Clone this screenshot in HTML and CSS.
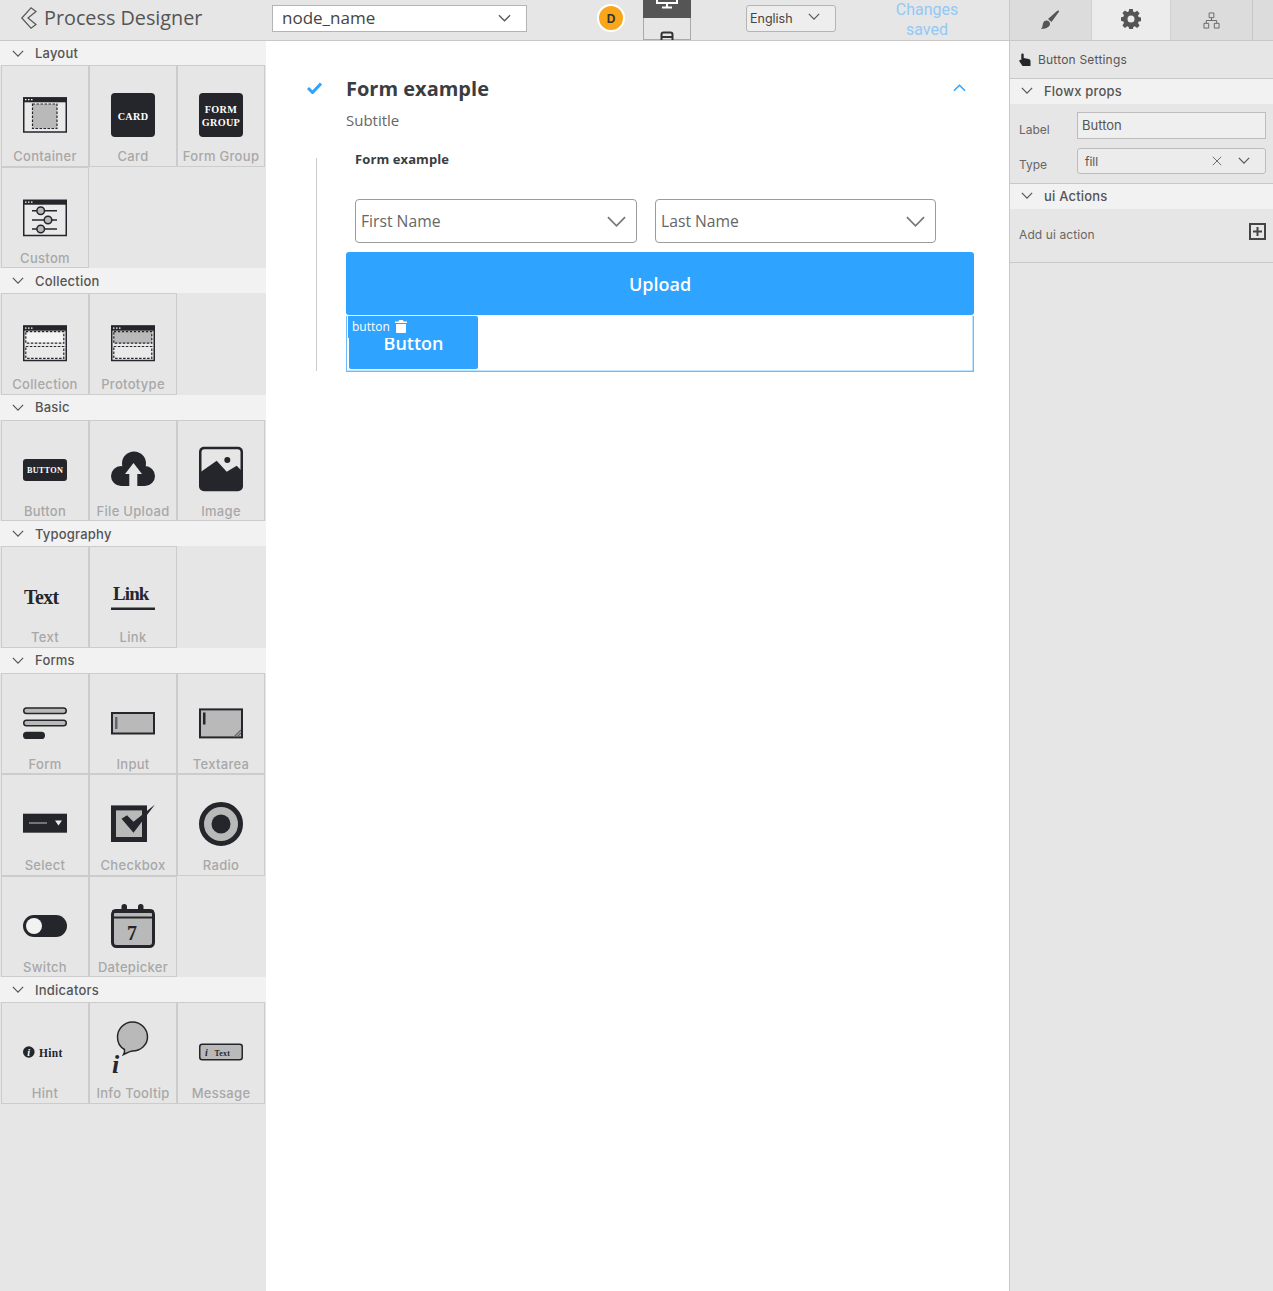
FILE: index.html

```html
<!DOCTYPE html>
<html>
<head>
  <meta charset="UTF-8">
  <title>Process Designer</title>
  <link rel="stylesheet" href="styles.css">
</head>
<body>
  <header class="topbar">
    <div class="brand">
      <svg class="back" viewBox="0 0 16 22"><path d="M10 .8L.8 11 10 21.200l5-3.700L7 11l8-6.500z"/></svg>
      <span>Process Designer</span>
    </div>
    <div class="node-select">
      <span>node_name</span>
      <svg class="chev" viewBox="0 0 14 8"><path d="M1 1l6 6 6-6"/></svg>
    </div>
    <div class="avatar">D</div>
    <div class="devices">
      <div class="device device-on">
        <svg viewBox="0 0 22 16"><path d="M1 -4h20v13H1zM11 9v4M6 13.500h10"/></svg>
      </div>
      <div class="device">
        <svg viewBox="0 0 14 22"><rect x="1.500" y="1.500" width="11" height="19" rx="2"/><path d="M1.500 6h11"/></svg>
      </div>
    </div>
    <div class="lang-select">
      <span>English</span>
      <svg class="chev" viewBox="0 0 14 8"><path d="M1 1l6 6 6-6"/></svg>
    </div>
    <div class="save-state">
      <span>Changes</span>
      <span>saved</span>
    </div>
    <nav class="tabs">
      <div class="tab">
        <svg class="ico-brush" viewBox="0 0 20 20"><path d="M18.500 0.500c.6.400.7 1 .3 1.600L11.500 12 8 9l9-8c.5-.5 1-.8 1.500-.5zM6.500 10.500c2 0 3.800 1.700 3.500 3.800-.4 3-4.500 4.700-9 4.700 1.500-1.500 1.300-3 2-5.500.5-1.800 1.800-3 3.500-3z"/></svg>
      </div>
      <div class="tab tab-active">
        <svg class="ico-gear" viewBox="0 0 20 20"><path fill-rule="evenodd" d="M8.200 0h3.600l.5 2.700 1.500.6 2.300-1.600 2.500 2.500-1.600 2.300.6 1.500 2.700.5v3.600l-2.700.5-.6 1.500 1.600 2.300-2.500 2.500-2.300-1.600-1.500.6-.5 2.700H8.200l-.5-2.700-1.500-.6-2.300 1.600-2.500-2.500 1.600-2.300-.6-1.500L0 11.800V8.200l2.400-.5.6-1.500-1.600-2.300 2.500-2.500 2.300 1.600 1.500-.6zM10 6.500a3.500 3.500 0 100 7 3.500 3.500 0 000-7z"/></svg>
      </div>
      <div class="tab">
        <svg class="ico-tree" viewBox="0 0 18 18"><path d="M6.500 1h5v5h-5zM1 12h5v5H1zM12 12h5v5h-5zM9 6v3M3.500 12V9h11v3"/></svg>
      </div>
      <div class="tab tab-rest"></div>
    </nav>
  </header>

  <div class="workspace">
    <aside class="palette">
      <div class="group-head"><svg class="chev" viewBox="0 0 14 8"><path d="M1 1l6 6 6-6"/></svg>Layout</div>
      <div class="group">
        <div class="cell">
          <svg class="icon" viewBox="0 0 44 44"><rect x="0.750" y="5" width="42.500" height="34" fill="#eaeaea" class="ln"/><rect y="4.300" width="44" height="5" class="dk"/><path d="M2 6.700h1.500M5 6.700h1.500M8 6.700h1.500" class="dots"/><rect x="9.500" y="11" width="24.500" height="24.500" fill="#b9b9b9" class="dash"/></svg>
          <span>Container</span>
        </div>
        <div class="cell">
          <svg class="icon" viewBox="0 0 44 44"><rect width="44" height="44" rx="4" class="dk"/><text x="22" y="27" class="ico-text t10">CARD</text></svg>
          <span>Card</span>
        </div>
        <div class="cell">
          <svg class="icon" viewBox="0 0 44 44"><rect width="44" height="44" rx="4" class="dk"/><text x="22" y="20" class="ico-text t10">FORM</text><text x="22" y="33" class="ico-text t10">GROUP</text></svg>
          <span>Form Group</span>
        </div>
        <div class="cell">
          <svg class="icon" viewBox="0 0 44 44"><rect x="0.750" y="5.500" width="42.500" height="35" fill="#eaeaea" class="ln"/><rect y="4.700" width="44" height="5" class="dk"/><path d="M2 7.100h1.500M5 7.100h1.500M8 7.100h1.500" class="dots"/><path d="M9 15.700h25M9 25h25M9 34h25" class="ln"/><circle cx="17.700" cy="15.700" r="3.800" fill="#b9b9b9" class="ln"/><circle cx="25" cy="25" r="3.800" fill="#b9b9b9" class="ln"/><circle cx="17.700" cy="34" r="3.800" fill="#b9b9b9" class="ln"/></svg>
          <span>Custom</span>
        </div>
      </div>

      <div class="group-head"><svg class="chev" viewBox="0 0 14 8"><path d="M1 1l6 6 6-6"/></svg>Collection</div>
      <div class="group">
        <div class="cell">
          <svg class="icon" viewBox="0 0 44 44"><rect x="0.750" y="5" width="42.500" height="34.500" fill="#eaeaea" class="ln"/><rect y="4.700" width="44" height="5" class="dk"/><path d="M2 7.100h1.500M5 7.100h1.500M8 7.100h1.500" class="dots"/><rect x="2.800" y="10.700" width="38" height="11.500" fill="#f4f4f4" class="dash"/><rect x="2.800" y="25.500" width="38" height="11.800" fill="#eaeaea" class="dash"/></svg>
          <span>Collection</span>
        </div>
        <div class="cell">
          <svg class="icon" viewBox="0 0 44 44"><rect x="0.750" y="5" width="42.500" height="34.500" fill="#eaeaea" class="ln"/><rect y="4.700" width="44" height="5" class="dk"/><path d="M2 7.100h1.500M5 7.100h1.500M8 7.100h1.500" class="dots"/><rect x="2.800" y="10.700" width="38" height="11.500" fill="#b9b9b9" class="dash"/><rect x="2.800" y="25.500" width="38" height="11.800" fill="#eaeaea" class="dash"/></svg>
          <span>Prototype</span>
        </div>
      </div>

      <div class="group-head"><svg class="chev" viewBox="0 0 14 8"><path d="M1 1l6 6 6-6"/></svg>Basic</div>
      <div class="group">
        <div class="cell">
          <svg class="icon" viewBox="0 0 44 44"><rect y="11" width="44" height="22" rx="3" class="dk"/><text x="22" y="25" class="ico-text t8">BUTTON</text></svg>
          <span>Button</span>
        </div>
        <div class="cell">
          <svg class="icon" viewBox="0 0 44 44"><circle cx="23" cy="15.500" r="12" class="dk"/><circle cx="10" cy="28" r="10" class="dk"/><circle cx="34" cy="28" r="10" class="dk"/><rect x="10" y="20" width="24" height="18" class="dk"/><path d="M22.500 15L31 26h-4.700v12h-8V26H14z" fill="#e6e6e6"/></svg>
          <span>File Upload</span>
        </div>
        <div class="cell">
          <svg class="icon" viewBox="0 0 44 44"><rect x="0" y="-1.300" width="44" height="44.600" rx="5" class="dk"/><rect x="2.500" y="1.200" width="39" height="26" rx="3" fill="#e6e6e6"/><path class="dk" d="M2 23.700l15.700-11 10 11 10-6 5 5V32H2z"/><circle cx="28.300" cy="12" r="3" class="dk"/></svg>
          <span>Image</span>
        </div>
      </div>

      <div class="group-head"><svg class="chev" viewBox="0 0 14 8"><path d="M1 1l6 6 6-6"/></svg>Typography</div>
      <div class="group">
        <div class="cell">
          <svg class="icon" viewBox="0 0 44 44"><text x="1" y="29.500" class="ico-word t20">Text</text></svg>
          <span>Text</span>
        </div>
        <div class="cell">
          <svg class="icon" viewBox="0 0 44 44"><text x="2" y="26" class="ico-word t19">Link</text><rect y="33.500" width="44" height="2.500" class="dk"/></svg>
          <span>Link</span>
        </div>
      </div>

      <div class="group-head"><svg class="chev" viewBox="0 0 14 8"><path d="M1 1l6 6 6-6"/></svg>Forms</div>
      <div class="group">
        <div class="cell">
          <svg class="icon" viewBox="0 0 44 44"><rect x="0.750" y="7" width="42.500" height="5.500" rx="2.750" fill="#b9b9b9" class="ln"/><rect x="0.750" y="19.250" width="42.500" height="5.500" rx="2.750" fill="#b9b9b9" class="ln"/><rect y="30.700" width="22" height="7.300" rx="3.600" class="dk"/></svg>
          <span>Form</span>
        </div>
        <div class="cell">
          <svg class="icon" viewBox="0 0 44 44"><rect x="1" y="12" width="42" height="20.500" fill="#b9b9b9" class="ln2"/><rect x="4" y="16" width="2.500" height="12" fill="#666"/></svg>
          <span>Input</span>
        </div>
        <div class="cell">
          <svg class="icon" viewBox="0 0 44 44"><rect x="1" y="8.400" width="42" height="28" fill="#b9b9b9" class="ln2"/><rect x="4" y="11.500" width="2.500" height="12" class="dk"/><path d="M35 36l7-7M38 36l4-4" stroke="#666" stroke-width="1.300"/></svg>
          <span>Textarea</span>
        </div>
        <div class="cell">
          <svg class="icon" viewBox="0 0 44 44"><rect y="11.700" width="44" height="19" class="dk"/><path d="M6 21h18" stroke="#aaa" stroke-width="1.200"/><path d="M32 18.500h7l-3.500 5z" fill="#eee"/></svg>
          <span>Select</span>
        </div>
        <div class="cell">
          <svg class="icon" viewBox="0 0 44 44"><rect x="2.500" y="5.900" width="31" height="31.600" fill="#b9b9b9" class="ln5"/><path class="dk" d="M10.500 16.700l5.500-3.500 6.500 6.500L44 2.400 22.500 30.700z"/></svg>
          <span>Checkbox</span>
        </div>
        <div class="cell">
          <svg class="icon" viewBox="0 0 44 44"><circle cx="22" cy="22" r="19.500" fill="#b9b9b9" stroke="#25262b" stroke-width="5"/><circle cx="22" cy="22" r="9.500" class="dk"/></svg>
          <span>Radio</span>
        </div>
        <div class="cell">
          <svg class="icon" viewBox="0 0 44 44"><rect y="11" width="44" height="22" rx="11" class="dk"/><circle cx="11" cy="22" r="8" fill="#f2f2f2"/></svg>
          <span>Switch</span>
        </div>
        <div class="cell">
          <svg class="icon" viewBox="0 0 44 44"><rect x="1.500" y="6.500" width="41" height="36" rx="4" fill="#b9b9b9" class="ln3"/><path d="M3 5.500h38a2 2 0 012 2V9H1V7.500a2 2 0 012-2z" class="dk"/><path d="M2 13.500h40" class="ln2"/><rect x="10.500" y="0" width="5.500" height="7" rx="2.700" class="dk"/><rect x="27" y="0" width="5.500" height="7" rx="2.700" class="dk"/><text x="20.700" y="36" class="ico-word t20 mid">7</text></svg>
          <span>Datepicker</span>
        </div>
      </div>

      <div class="group-head"><svg class="chev" viewBox="0 0 14 8"><path d="M1 1l6 6 6-6"/></svg>Indicators</div>
      <div class="group">
        <div class="cell">
          <svg class="icon" viewBox="0 0 44 44"><circle cx="5.800" cy="22" r="5.800" class="dk"/><text x="5.800" y="26" class="ico-text t10 ital">i</text><text x="16" y="26.500" class="ico-word t11s">Hint</text></svg>
          <span>Hint</span>
        </div>
        <div class="cell">
          <svg class="icon" viewBox="0 0 44 44"><path d="M12.500 24.500c1-2 1.300-3.500 1-5C9 17 6.500 12 6.500 7 6.500-1 13-8 21.500-8S36.500-1 36.500 7c0 8-7 14-15 14-1.500 0-3 .5-9 3.500z" fill="#b9b9b9" class="ln"/><text x="1" y="43" class="ico-word ital-word">i</text></svg>
          <span>Info Tooltip</span>
        </div>
        <div class="cell">
          <svg class="icon" viewBox="0 0 44 44"><rect x="0.750" y="14.250" width="42.500" height="15.500" rx="2.500" fill="#b9b9b9" class="ln"/><text x="6" y="25.500" class="ico-word t10s ital">i</text><text x="15.500" y="25.500" class="ico-word t8s">Text</text></svg>
          <span>Message</span>
        </div>
      </div>
    </aside>

    <main class="canvas">
      <div class="title-row">
        <svg class="check" viewBox="0 0 15 12"><path d="M1 6l4.500 4.500L14 1.500" /></svg>
        <h1>Form example</h1>
        <svg class="collapse" viewBox="0 0 14 8"><path d="M1 7l6-6 6 6"/></svg>
      </div>
      <div class="subtitle">Subtitle</div>
      <section class="form-body">
        <div class="form-label">Form example</div>
        <div class="field-row">
          <div class="field">
            <span>First Name</span>
            <svg class="field-chev" viewBox="0 0 20 11"><path d="M1 1l9 9 9-9"/></svg>
          </div>
          <div class="field">
            <span>Last Name</span>
            <svg class="field-chev" viewBox="0 0 20 11"><path d="M1 1l9 9 9-9"/></svg>
          </div>
        </div>
        <div class="upload">Upload</div>
        <div class="selected-box">
          <div class="tag">
            <span>button</span>
            <svg class="trash" viewBox="0 0 12 13"><path d="M4 0h4l.5 1.500H12V3H0V1.500h3.500zM1 4h10v8a1 1 0 01-1 1H2a1 1 0 01-1-1z"/></svg>
          </div>
          <div class="inner-button">Button</div>
        </div>
      </section>
    </main>

    <aside class="settings">
      <div class="settings-title">
        <svg class="hand" viewBox="0 0 12 13"><path d="M3.500 0.500c.7 0 1.200.5 1.200 1.200v3.200l5 1c1 .2 1.800 1 1.800 2V13H3.500L0.500 8.500c-.4-.6-.2-1.300.3-1.600.5-.3 1.100-.1 1.500.3l0 0V1.700c0-.7.500-1.200 1.200-1.200z"/></svg>
        Button Settings
      </div>
      <div class="group-head head-right"><svg class="chev" viewBox="0 0 14 8"><path d="M1 1l6 6 6-6"/></svg>Flowx props</div>
      <div class="props">
        <div class="prop">
          <label>Label</label>
          <div class="prop-input">Button</div>
        </div>
        <div class="prop">
          <label>Type</label>
          <div class="prop-select">
            <span>fill</span>
            <svg class="clear" viewBox="0 0 12 12"><path d="M1 1l10 10M11 1L1 11"/></svg>
            <svg class="chev" viewBox="0 0 14 8"><path d="M1 1l6 6 6-6"/></svg>
          </div>
        </div>
      </div>
      <div class="group-head head-right"><svg class="chev" viewBox="0 0 14 8"><path d="M1 1l6 6 6-6"/></svg>ui Actions</div>
      <div class="actions">
        <span>Add ui action</span>
        <svg class="add" viewBox="0 0 17 17"><path d="M1 1h15v15H1zM8.500 4v9M4 8.500h9"/></svg>
      </div>
    </aside>
  </div>
</body>
</html>
```

FILE: styles.css

```css
* {
  box-sizing: border-box;
}

body {
  margin: 0;
  height: 100vh;
  overflow: hidden;
  display: flex;
  flex-direction: column;
  background: #fff;
  font-family: "Inter", "Liberation Sans", sans-serif;
  color: #555;
}

svg {
  display: block;
}

.chev {
  fill: none;
  stroke: #555;
  stroke-width: 1.400;
}

/* top bar */
.topbar {
  flex: none;
  height: 41px;
  display: flex;
  background: #e6e6e6;
  border-bottom: 1px solid #c8c8c8;
  overflow: hidden;
}

.brand {
  width: 266px;
  padding: 0 0 5px 21px;
  display: flex;
  align-items: center;
  gap: 7px;
  font-family: "Open Sans", sans-serif;
  font-size: 19.800px;
  color: #555;
}

.back {
  width: 16px;
  height: 22px;
  fill: #e6e6e6;
  stroke: #555;
  stroke-width: 1.200;
}

.node-select {
  width: 255px;
  height: 27px;
  margin: 5px 0 0 6px;
  padding: 0 15px 3px 9px;
  display: flex;
  align-items: center;
  justify-content: space-between;
  background: #fff;
  border: 1px solid #b4b4b4;
  font-family: "Open Sans", sans-serif;
  font-size: 17px;
  color: #444;
}

.node-select .chev {
  width: 13px;
  height: 8px;
  margin-top: 2px;
}

.avatar {
  width: 28px;
  height: 28px;
  margin: 4px 0 0 70px;
  border-radius: 50%;
  background: #faa61a;
  border: 2px solid #fff;
  display: flex;
  align-items: center;
  justify-content: center;
  font-size: 12px;
  font-weight: 700;
  color: #333;
}

.devices {
  width: 48px;
  margin-left: 18px;
  display: flex;
  flex-direction: column;
}

.device {
  height: 22px;
  border: 1px solid #aaa;
  border-top: 0;
  display: flex;
  justify-content: center;
  padding-top: 13px;
}

.device svg {
  flex: none;
  width: 14px;
  height: 22px;
  fill: none;
  stroke: #333;
  stroke-width: 2;
}

.device-on {
  height: 18px;
  padding-top: 0;
  background: #555;
  border: 0;
}

.device-on svg {
  width: 22px;
  height: 16px;
  margin-top: -6px;
  stroke: #fff;
  overflow: visible;
}

.lang-select {
  width: 90px;
  height: 27px;
  margin: 5px 0 0 55px;
  padding: 0 15px 1px 3px;
  display: flex;
  align-items: center;
  justify-content: space-between;
  background: #eee;
  border: 1px solid #b4b4b4;
  border-radius: 3px;
  font-size: 12.500px;
  color: #444;
}

.lang-select .chev {
  width: 12px;
  height: 7px;
  margin-bottom: 3px;
}

.save-state {
  width: 70px;
  margin-left: 56px;
  padding-top: 3px;
  flex: none;
  display: flex;
  flex-direction: column;
  gap: 6px;
  align-items: center;
  font-family: "Roboto", sans-serif;
  font-size: 16px;
  line-height: 14px;
  color: #92c9f5;
}

.tabs {
  margin-left: auto;
  width: 264px;
  height: 41px;
  flex: none;
  display: flex;
  border-left: 1px solid #c8c8c8;
}

.tab {
  width: 81px;
  height: 41px;
  display: flex;
  align-items: center;
  justify-content: center;
  background: #dcdcdc;
  border-bottom: 1px solid #c8c8c8;
}

.tab-active {
  width: 80px;
  padding-bottom: 2px;
  background: #ececec;
  border-left: 1px solid #d0d0d0;
  border-right: 1px solid #d0d0d0;
}

.tab-rest {
  flex: 1;
  border-left: 1px solid #c8c8c8;
}

.ico-brush {
  width: 20px;
  height: 20px;
  margin-right: 1px;
  fill: #555;
}

.ico-gear {
  width: 20px;
  height: 20px;
  fill: #555;
}

.ico-tree {
  width: 17px;
  height: 17px;
  margin-right: 1px;
  fill: none;
  stroke: #666;
  stroke-width: 1;
}

/* body */
.workspace {
  flex: 1;
  display: flex;
  min-height: 0;
}

.palette {
  width: 266px;
  flex: none;
  background: #e6e6e6;
}

.group-head {
  height: 25px;
  padding-left: 12px;
  display: flex;
  align-items: center;
  gap: 11px;
  background: #f2f2f2;
  font-size: 13px;
  font-weight: 500;
  color: #555;
  letter-spacing: .2px;
}

.palette .group-head:first-child {
  height: 24px;
}

.group-head .chev {
  width: 12px;
  height: 7px;
}

.group {
  display: grid;
  grid-template-columns: repeat(3, 88px);
  padding-left: 1px;
}

.cell {
  height: 101.500px;
  border: 1px solid #ccc;
  padding-top: 27px;
  display: flex;
  flex-direction: column;
  align-items: center;
  font-size: 13px;
  font-weight: 500;
  letter-spacing: .3px;
  color: #a8a8a8;
  background: #e6e6e6;
}

.cell span {
  margin-top: 10px;
  line-height: 18px;
  white-space: nowrap;
}

.icon {
  width: 44px;
  height: 44px;
  overflow: visible;
  flex: none;
}

.dk {
  fill: #25262b;
}

.ln {
  stroke: #25262b;
  stroke-width: 1.500;
}

.ln:not([fill]) {
  fill: none;
}

.ln2 {
  stroke: #25262b;
  stroke-width: 2;
}

.ln3 {
  stroke: #25262b;
  stroke-width: 3;
}

.ln5 {
  stroke: #25262b;
  stroke-width: 5;
}

.dash {
  stroke: #25262b;
  stroke-width: 1.200;
  stroke-dasharray: 2.500 1.500;
}

.dots {
  stroke: #fff;
  stroke-width: 1.200;
}

.ico-text {
  font-family: "Liberation Serif", serif;
  font-weight: 700;
  fill: #fff;
  text-anchor: middle;
}

.ico-word {
  font-family: "Liberation Serif", serif;
  font-weight: 700;
  fill: #25262b;
}

.t8 { font-size: 8.200px; }
.t10 { font-size: 10.200px; }
.t20 { font-size: 20px; letter-spacing: -.6px; }
.t19 { font-size: 19px; letter-spacing: -.9px; }
.t11s { font-size: 11.500px; }
.t10s { font-size: 10px; }
.t8s { font-size: 7.800px; }
.ital { font-style: italic; }
.mid { text-anchor: middle; }
.ital-word { font-style: italic; font-size: 26px; }

/* canvas */
.canvas {
  flex: 1;
  min-width: 0;
  background: #fff;
  font-family: "Open Sans", sans-serif;
}

.title-row {
  margin: 33px 43px 0 41px;
  height: 28px;
  display: flex;
  align-items: center;
}

.check {
  width: 15px;
  height: 12px;
  fill: none;
  stroke: #2ea3ff;
  stroke-width: 3;
}

h1 {
  margin: 0 0 0 24px;
  flex: 1;
  font-size: 20px;
  font-weight: 700;
  color: #3b3d42;
}

.collapse {
  width: 13px;
  height: 8px;
  fill: none;
  stroke: #2ea3ff;
  stroke-width: 1.600;
}

.subtitle {
  margin: 8px 0 0 80px;
  line-height: 20px;
  font-size: 15px;
  color: #666;
}

.form-body {
  display: flow-root;
  margin: 28px 35px 0 50px;
  padding-left: 29px;
  height: 213px;
  border-left: 1px solid #ccc;
}

.form-label {
  margin: -8px 0 0 9px;
  line-height: 18px;
  font-size: 13px;
  font-weight: 700;
  letter-spacing: .1px;
  color: #3b3d42;
}

.field-row {
  margin: 31px 0 0 9px;
  display: flex;
  gap: 18px;
}

.field {
  width: 282px;
  height: 44px;
  padding: 0 10px 0 5px;
  display: flex;
  align-items: center;
  justify-content: space-between;
  border: 1px solid #9b9b9b;
  border-radius: 4px;
  font-size: 15.700px;
  color: #666;
}

.field:last-child {
  width: 281px;
}

.field-chev {
  width: 19px;
  height: 11px;
  fill: none;
  stroke: #777;
  stroke-width: 1.800;
}

.upload {
  margin-top: 9px;
  height: 63px;
  display: flex;
  align-items: center;
  justify-content: center;
  background: #2ea3ff;
  border-radius: 3px;
  font-size: 18px;
  font-weight: 600;
  color: #fff;
}

.selected-box {
  position: relative;
  height: 56px;
  padding: 0 2px;
  border: 1px solid #6cbcff;
  border-top-width: 0;
  box-shadow: inset 0 -1px 0 rgba(46, 163, 255, .3), inset -1px 0 0 rgba(46, 163, 255, .3);
}

.inner-button {
  width: 129px;
  height: 53px;
  margin-top: 1px;
  display: flex;
  align-items: center;
  justify-content: center;
  background: #2ea3ff;
  border-radius: 2px;
  font-size: 18px;
  font-weight: 600;
  color: #fff;
}

.tag {
  position: absolute;
  top: 0;
  left: 1px;
  width: 66px;
  height: 22px;
  padding: 0 0 1px 4px;
  display: flex;
  align-items: center;
  gap: 5px;
  background: #2ea3ff;
  font-size: 12px;
  color: #fff;
}

.trash {
  width: 12px;
  height: 13px;
  fill: #fff;
}

/* right panel */
.settings {
  width: 264px;
  flex: none;
  background: #e6e6e6;
  border-left: 1px solid #c8c8c8;
  font-size: 12px;
}

.settings-title {
  height: 38px;
  padding-left: 9px;
  display: flex;
  align-items: center;
  gap: 7px;
  border-bottom: 1px solid #c8c8c8;
  letter-spacing: .2px;
  color: #555;
}

.hand {
  width: 12px;
  height: 13px;
  fill: #25262b;
}

.head-right {
  padding: 0 0 2px 11px;
}

.props {
  padding: 8px 7px 9px 9px;
  border-bottom: 1px solid #c8c8c8;
}

.prop {
  display: flex;
  align-items: center;
  justify-content: space-between;
  margin-bottom: 9px;
}

.prop:last-child {
  margin-bottom: 0;
}

.prop label {
  margin-top: 7px;
  color: #666;
}

.prop-input {
  width: 189px;
  height: 27px;
  padding: 0 0 1px 4px;
  display: flex;
  align-items: center;
  background: #efefef;
  border: 1px solid #bcbcbc;
  font-size: 13px;
  color: #555;
}

.prop-select {
  width: 189px;
  height: 26px;
  padding: 0 15px 0 7px;
  display: flex;
  align-items: center;
  background: #ececec;
  border: 1px solid #bcbcbc;
  border-radius: 3px;
  color: #555;
}

.prop-select span {
  flex: 1;
}

.clear {
  width: 10px;
  height: 10px;
  margin-right: 16px;
  fill: none;
  stroke: #555;
  stroke-width: 1;
}

.prop-select .chev {
  width: 12px;
  height: 7px;
  margin-bottom: 2px;
}

.actions {
  height: 54px;
  padding: 14px 7px 0 9px;
  display: flex;
  justify-content: space-between;
  align-items: flex-start;
  border-bottom: 1px solid #c8c8c8;
  color: #666;
  letter-spacing: .1px;
}

.actions span {
  margin-top: 4px;
}

.add {
  width: 17px;
  height: 17px;
  fill: none;
  stroke: #444;
  stroke-width: 2;
}
```
